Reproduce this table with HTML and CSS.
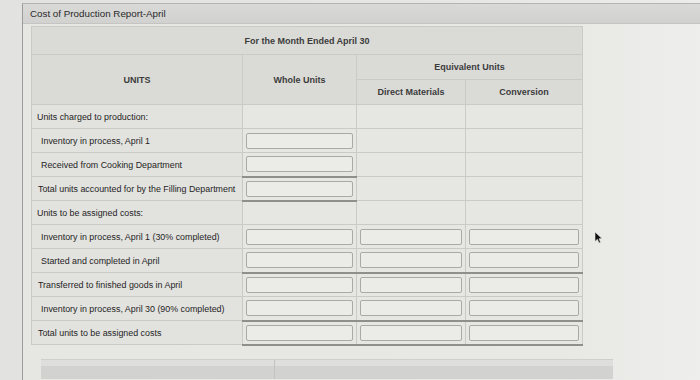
FILE: index.html
```html
<!DOCTYPE html>
<html lang="en">
<head>
<meta charset="utf-8">
<title>Cost of Production Report-April</title>
<link rel="stylesheet" href="styles.css">
</head>
<body>
<div class="screen">
  <div class="panel">
    <div class="titlebar">Cost of Production Report-April</div>
    <div class="panel-body">
      <table class="report">
        <colgroup>
          <col class="c-label"><col class="c-whole"><col class="c-dm"><col class="c-conv">
        </colgroup>
        <tr class="h1">
          <th colspan="4">For the Month Ended April 30</th>
        </tr>
        <tr class="h2">
          <th rowspan="2">UNITS</th>
          <th rowspan="2">Whole Units</th>
          <th colspan="2">Equivalent Units</th>
        </tr>
        <tr class="h3">
          <th>Direct Materials</th>
          <th>Conversion</th>
        </tr>
        <tr>
          <td class="lbl">Units charged to production:</td>
          <td></td><td></td><td></td>
        </tr>
        <tr>
          <td class="lbl sub">Inventory in process, April 1</td>
          <td class="in"><input type="text"></td><td></td><td></td>
        </tr>
        <tr>
          <td class="lbl sub">Received from Cooking Department</td>
          <td class="in"><input type="text"></td><td></td><td></td>
        </tr>
        <tr>
          <td class="lbl tot">Total units accounted for by the Filling Department</td>
          <td class="in tt tb"><input type="text"></td><td></td><td></td>
        </tr>
        <tr>
          <td class="lbl">Units to be assigned costs:</td>
          <td></td><td></td><td></td>
        </tr>
        <tr>
          <td class="lbl sub">Inventory in process, April 1 (30% completed)</td>
          <td class="in"><input type="text"></td><td class="in"><input type="text"></td><td class="in"><input type="text"></td>
        </tr>
        <tr>
          <td class="lbl sub">Started and completed in April</td>
          <td class="in"><input type="text"></td><td class="in"><input type="text"></td><td class="in"><input type="text"></td>
        </tr>
        <tr>
          <td class="lbl tot">Transferred to finished goods in April</td>
          <td class="in tt"><input type="text"></td><td class="in tt"><input type="text"></td><td class="in tt"><input type="text"></td>
        </tr>
        <tr>
          <td class="lbl sub">Inventory in process, April 30 (90% completed)</td>
          <td class="in"><input type="text"></td><td class="in"><input type="text"></td><td class="in"><input type="text"></td>
        </tr>
        <tr>
          <td class="lbl tot">Total units to be assigned costs</td>
          <td class="in tt tb"><input type="text"></td><td class="in tt tb"><input type="text"></td><td class="in tt tb"><input type="text"></td>
        </tr>
      </table>
      <div class="next-section">
        <div class="ns-cell ns-left"></div>
        <div class="ns-cell ns-right"></div>
      </div>
    </div>
  </div>
  <svg class="cursor" width="9" height="13" viewBox="0 0 9 13" aria-hidden="true">
    <path d="M1 1 L1 10.5 L3.4 8.3 L5 12 L6.6 11.3 L5 7.8 L8 7.6 Z" fill="#111" stroke="#e8e8e6" stroke-width="0.6"/>
  </svg>
</div>
</body>
</html>
```

FILE: styles.css
```css
* { box-sizing: border-box; }

html, body {
  margin: 0;
  padding: 0;
}

body {
  width: 700px;
  height: 380px;
  overflow: hidden;
  background: linear-gradient(90deg, #e2e2e0 0%, #e6e6e4 60%, #ececea 100%);
  font-family: "Liberation Sans", Arial, sans-serif;
  color: #2e2e2e;
}

.screen {
  position: relative;
  width: 700px;
  height: 380px;
  padding-top: 3px;
}

.panel {
  margin-left: 22px;
  height: 377px;
  border-left: 1px solid #9c9c9a;
  border-top: 1px solid #b4b4b2;
  background: linear-gradient(90deg, #e6e6e3 0%, #e8e8e5 80%, #eeeeec 100%);
}

.titlebar {
  height: 20px;
  line-height: 20px;
  padding-left: 7px;
  font-size: 9.8px;
  color: #2a2a2a;
  background: linear-gradient(180deg, #d9d9d7 0%, #d1d1cf 100%);
  border-bottom: 1px solid #c4c4c2;
}

.panel-body {
  padding: 2px 0 0 8px;
}

.report {
  table-layout: fixed;
  width: 551px;
  border-collapse: collapse;
  border: 1px solid #bdbdb9;
}

.c-label { width: 211px; }
.c-whole { width: 114px; }
.c-dm { width: 109px; }
.c-conv { width: 117px; }

.report th,
.report td {
  border: 1px solid #cacac6;
  padding: 0;
}

.report th {
  background: #dadad6;
  font-size: 9px;
  font-weight: bold;
  color: #3c3c3c;
  text-align: center;
  vertical-align: middle;
}

.h1 th { height: 28px; }
.h2 th { height: 25px; }
.h3 th { height: 25px; }

.report td {
  height: 24px;
  background: #e6e6e2;
  vertical-align: middle;
}

.report td.lbl {
  background: #e2e2de;
  font-size: 8.9px;
  color: #1f1f1f;
  padding-left: 5px;
  white-space: nowrap;
}

.report td.sub { padding-left: 9px; }
.report td.tot { padding-left: 6px; }

.report td.in {
  padding: 0 3px;
}

.report td.tt { border-top: 2px solid #8f8f8c; }
.report td.tb { border-bottom: 2px solid #8f8f8c; }

.report input {
  display: block;
  width: 100%;
  height: 16px;
  margin: 0;
  padding: 0;
  border: 1px solid #a9a9a6;
  border-radius: 2px;
  background: #ebebe8;
  font: inherit;
}

.next-section {
  display: flex;
  margin-top: 13px;
  margin-left: 10px;
  width: 572px;
  height: 20px;
  border-top: 1px solid #cfcfcd;
  background: linear-gradient(180deg, #dededc 0%, #dededc 30%, #d2d2d0 31%, #d2d2d0 100%);
}

.ns-left {
  width: 234px;
  border-right: 1px solid #c2c2c0;
}

.ns-right {
  flex: 1;
}

.cursor {
  position: absolute;
  left: 594px;
  top: 231px;
}
```
